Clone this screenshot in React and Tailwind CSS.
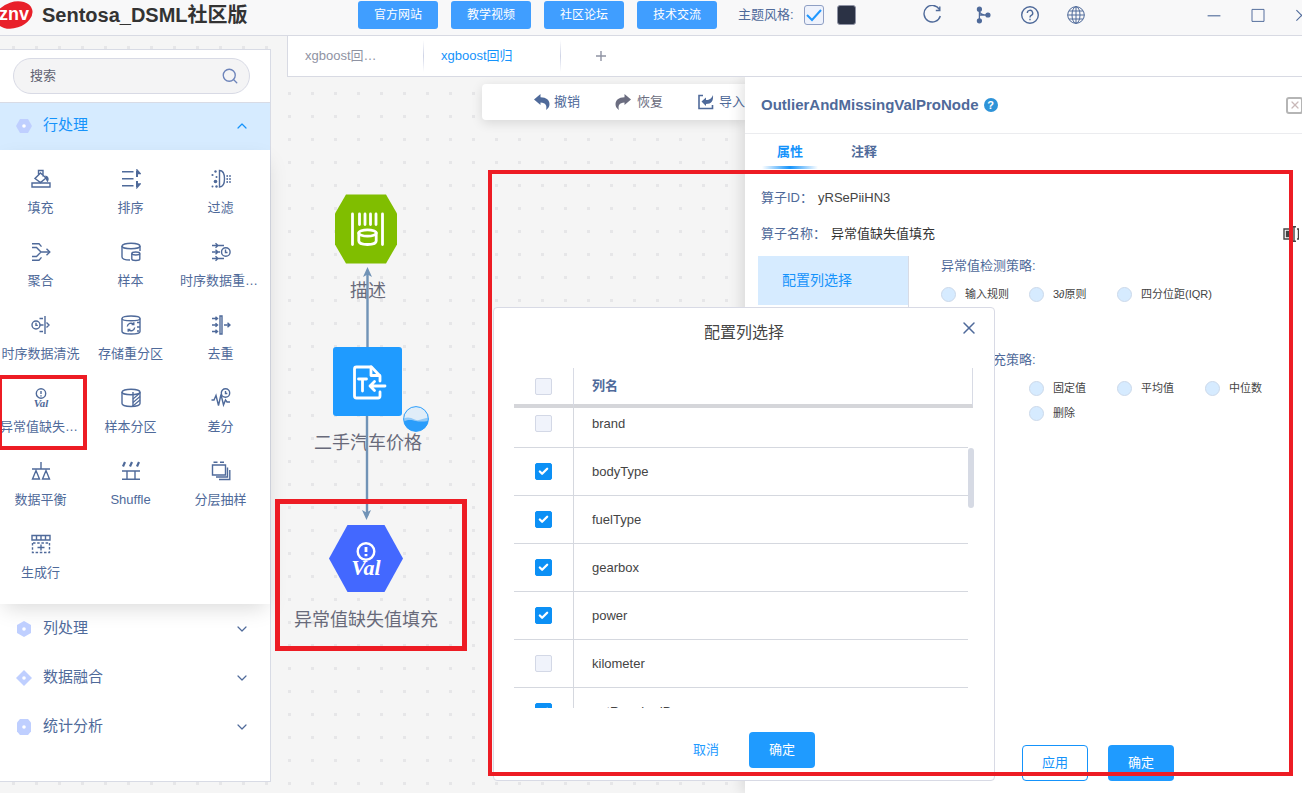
import React, { useState } from 'react';
import { ChevronUp, ChevronDown, Search, X, Check } from 'lucide-react';

const FONT = 'font-["Liberation_Sans","Noto_Sans_CJK_SC",sans-serif]';

const Icon = ({ children, className = 'w-5 h-5' }) => (
  <svg
    viewBox="0 0 20 20"
    fill="none"
    stroke="currentColor"
    strokeWidth="1.4"
    className={className}
    aria-hidden="true"
  >
    {children}
  </svg>
);

const FillIcon = () => (
  <Icon>
    <path d="M1 14h18v4H1z" />
    <path d="M9.5 4 15 9l-5.500 4.500L4 9.500z M7.500 6V1.500h4.500v6" />
    <path d="M15 7.500c2 .5 2.500 2.500 1.500 4.500-1-1-1.500-2.500-1.500-4.500z" fill="currentColor" />
  </Icon>
);

const SortIcon = () => (
  <Icon>
    <path d="M1 2.700h11.500M1 9.700h11.500M1 16.700h11.500" />
    <path d="M16 8V2M16 18v-6" strokeWidth="2" />
    <path d="M16 1l3 3.500h-3zM16 18.500l3-3.500h-3z" fill="currentColor" />
  </Icon>
);

const FilterIcon = () => (
  <Icon>
    <path d="M8.500 1.500v16.500c4 0 5-4 5-8.200s-1-8.300-5-8.300z" />
    <g fill="currentColor" stroke="none">
      <circle cx="4.500" cy="2.500" r="1.200" />
      <circle cx="1.500" cy="6" r="1.100" />
      <circle cx="5.500" cy="8" r="1" />
      <circle cx="4.500" cy="12.500" r="1.800" />
      <circle cx="1.500" cy="17.500" r="1" />
      <circle cx="5.500" cy="17.500" r="1.200" />
      <circle cx="16.200" cy="7" r=".9" />
      <circle cx="19" cy="7" r=".9" />
      <circle cx="16.200" cy="10" r=".9" />
      <circle cx="19" cy="10" r=".9" />
      <circle cx="16.200" cy="13" r=".9" />
      <circle cx="19" cy="13" r=".9" />
    </g>
  </Icon>
);

const AggregateIcon = () => (
  <Icon>
    <path d="M1 1.800h7l2.500 2.800M1 5.500h4.500L10 10h8.500M1 14.500h4.500L10 10M1 18.200h7l2.500-2.800" />
    <path d="M15.500 6.800 18.800 10l-3.300 3.200" />
  </Icon>
);

const SampleIcon = () => (
  <Icon>
    <ellipse cx="10" cy="4" rx="9" ry="2.800" />
    <path d="M1 4v11c0 1.800 3.500 3 8 3M19 4v5" />
    <ellipse cx="14.800" cy="11.500" rx="4" ry="1.500" />
    <path d="M10.800 11.500v5.500c0 .9 1.700 1.500 4 1.500s4-.6 4-1.500v-5.500" />
  </Icon>
);

const ResampleIcon = () => (
  <Icon>
    <path d="M1 3.500h12M1 10h8M1 16.500h12M4.500 1.200 7 3.500 4.500 5.800M4.500 7.700 7 10l-2.500 2.300M4.500 14.200 7 16.500l-2.500 2.300" />
    <circle cx="14.800" cy="10" r="4.300" />
    <path d="M14.500 7.500V10.500h2" />
  </Icon>
);

const CleanIcon = () => (
  <Icon>
    <circle cx="5" cy="10" r="4" />
    <path d="M5 7.800v2.600h1.800M9 10h3.500M8.500 3.500h3.500M8.500 16.500h3.500M14 1v18M15.500 7.500l2.500 2.500-2.500 2.500" />
  </Icon>
);

const RepartitionIcon = () => (
  <Icon>
    <path d="M1 3.500C1 2 5 1 10 1s9 1 9 2.500v13c0 1.500-4 2.500-9 2.500s-9-1-9-2.500z" />
    <path d="M1 3.500C1 5 5 5.800 10 5.800s9-.8 9-2.300" />
    <path d="M6.300 11.500a3.700 3.700 0 0 1 6.200-2.300M13.700 12.500a3.700 3.700 0 0 1-6.200 2.300M12.800 7.300v2.200h-2.200M7.200 16.700v-2.200h2.200M16 7.500h3M16 12h3M16 16h2" />
  </Icon>
);

const DistinctIcon = () => (
  <Icon>
    <path d="M1 3.500h5M1 10h5M1 16.500h5M13 10h5.500M4.500 1.800 6.500 3.500l-2 1.700M4.500 8.300 6.500 10l-2 1.700M4.500 14.800l2 1.700-2 1.700M16.500 7.700l2.500 2.300-2.500 2.300" />
    <path d="M9 1v18h2V1z" />
  </Icon>
);

const ValIcon = () => (
  <Icon>
    <circle cx="10" cy="5.500" r="4.700" />
    <path d="M10 2.900v3.200M10 7.200v1.200" />
    <text
      x="10"
      y="19"
      textAnchor="middle"
      fill="currentColor"
      stroke="none"
      className='font-["Liberation_Serif",serif] text-[11px] font-bold italic'
    >
      Val
    </text>
  </Icon>
);

const SplitIcon = () => (
  <Icon>
    <ellipse cx="10" cy="4" rx="9" ry="2.800" />
    <path d="M1 4v11.500c0 1.700 4 3 9 3s9-1.300 9-3V4M12 4v14" />
    <path d="M12 11l7-6M12 14.500l7-6M12.500 17.500l6.500-5.500" strokeWidth="1.100" />
  </Icon>
);

const DiffIcon = () => (
  <Icon>
    <path d="M.5 12h2.500l2-4.500 2.500 10 2.500-11 2.500 10.500 2-5 1.500 2h3" />
    <circle cx="14.500" cy="5" r="4.200" />
    <path d="M14.500 3v2.500h1.800" />
  </Icon>
);

const BalanceIcon = () => (
  <Icon>
    <path d="M1 8h18M10 1v7M1.500 18h7L5 9.500zM11.500 18h7L15 9.500z" />
  </Icon>
);

const ShuffleIcon = () => (
  <Icon>
    <path d="M4 1 2 5.500M11 1 9 5.500M18 1l-2 4.500" strokeWidth="2.200" />
    <path d="M1 10h18M1 18.300h18M6 10v8M14 10v8" />
  </Icon>
);

const LayerIcon = () => (
  <Icon>
    <path d="M1.500 4h13v10h-13zM2.500 1.300h4M9 1.300h4M16.500 6.500V16H5M18.800 9v9.500H8" />
  </Icon>
);

const GenerateIcon = () => (
  <Icon>
    <path d="M1 1.500h18v4.500H1zM5.500 1.500V6M10 1.500V6M14.500 1.500V6" />
    <path d="M1.500 9v9.500h17V9M2 9h16" strokeDasharray="2.500 1.700" />
    <path d="M10 10.500v6M6.500 13.500h7" />
  </Icon>
);

const OPERATORS = [
  { name: '填充', icon: FillIcon },
  { name: '排序', icon: SortIcon },
  { name: '过滤', icon: FilterIcon },
  { name: '聚合', icon: AggregateIcon },
  { name: '样本', icon: SampleIcon },
  { name: '时序数据重采样', icon: ResampleIcon },
  { name: '时序数据清洗', icon: CleanIcon },
  { name: '存储重分区', icon: RepartitionIcon },
  { name: '去重', icon: DistinctIcon },
  { name: '异常值缺失值填充', icon: ValIcon },
  { name: '样本分区', icon: SplitIcon },
  { name: '差分', icon: DiffIcon },
  { name: '数据平衡', icon: BalanceIcon },
  { name: 'Shuffle', icon: ShuffleIcon },
  { name: '分层抽样', icon: LayerIcon },
  { name: '生成行', icon: GenerateIcon }
];

const GROUPS = [
  { name: '列处理', shape: 'M8 0l7 4v8l-7 4-7-4V4z' },
  { name: '数据融合', shape: 'M8 0l8 8-8 8-8-8z' },
  { name: '统计分析', shape: 'M4 0h8l3 3.500v9L12 16H4l-3-3.500v-9z' }
];

const LINKS = ['官方网站', '教学视频', '社区论坛', '技术交流'];

const COLUMNS = [
  { name: 'brand', checked: false },
  { name: 'bodyType', checked: true },
  { name: 'fuelType', checked: true },
  { name: 'gearbox', checked: true },
  { name: 'power', checked: true },
  { name: 'kilometer', checked: false },
  { name: 'notRepairedDamage', checked: true }
];

const GroupMark = ({ shape }) => (
  <svg viewBox="0 0 16 16" className="h-4 w-4 shrink-0" aria-hidden="true">
    <path d={shape} fill="#bfcfff" />
    <circle cx="8" cy="8" r="1.800" fill="#fff" />
  </svg>
);

const Header = () => (
  <header className="flex h-9 shrink-0 items-center overflow-hidden border-b border-[#d8dae3] bg-[#f8f8f9] pb-[5px] text-[#4f6a9a]">
    <svg viewBox="0 0 34 30" className="h-[30px] w-[34px] shrink-0" aria-hidden="true">
      <ellipse cx="14" cy="15" rx="19" ry="13" fill="#e8202a" transform="rotate(-18 14 15)" />
      <text
        x="-1"
        y="20"
        fill="#fff"
        className='font-["Liberation_Sans",sans-serif] text-[18px] font-bold'
      >
        znv
      </text>
    </svg>
    <h1 className="ml-2 w-[316px] shrink-0 whitespace-nowrap text-[20px] leading-7 font-bold text-[#333]">
      Sentosa_DSML社区版
    </h1>
    <nav className="flex shrink-0 gap-[13px]">
      {LINKS.map((name) => (
        <button key={name} className="h-7 w-20 rounded-[3px] bg-[#409eff] text-xs text-white">
          {name}
        </button>
      ))}
    </nav>
    <div className="ml-[21px] flex shrink-0 items-center">
      <span className="text-[13px]">主题风格:</span>
      <label className="relative ml-[10px] flex">
        <input
          type="checkbox"
          defaultChecked
          aria-label="浅色主题"
          className="h-5 w-5 appearance-none rounded-[3px] border border-[#8f9fc4] bg-[#eef2fc]"
        />
        <svg
          viewBox="0 0 20 20"
          className="pointer-events-none absolute inset-0 h-5 w-5 text-[#1f97ff]"
          fill="none"
          stroke="currentColor"
          strokeWidth="2"
        >
          <path d="M3 10l5 5L17 5" />
        </svg>
      </label>
      <button aria-label="深色主题" className="ml-[13px] h-5 w-[19px] rounded-[3px] border border-[#8f93a5] bg-[#2b3245]" />
    </div>
    <div className="ml-[66px] flex shrink-0 items-center gap-7">
      <button aria-label="刷新">
        <Icon>
          <path d="M17.500 4.500A8.300 8.300 0 1 0 18.300 11M17.800 1.500v4h-4" />
        </Icon>
      </button>
      <button aria-label="流程">
        <Icon className="ml-1 h-[18px] w-[18px]">
          <path d="M6 4v12M6 10h9M6 5c0 3 3 5 9 5" />
          <g fill="currentColor">
            <circle cx="6" cy="3.500" r="2.200" />
            <circle cx="6" cy="16.500" r="2.200" />
            <circle cx="15.500" cy="10" r="2.200" />
          </g>
        </Icon>
      </button>
      <button aria-label="帮助">
        <Icon>
          <circle cx="10" cy="10" r="8.300" />
          <path d="M7.300 8a2.700 2.700 0 1 1 4 2.400c-.9.5-1.300 1-1.300 2M10 13.800v1.400" />
        </Icon>
      </button>
      <button aria-label="语言" className="-ml-[2px]">
        <Icon>
          <g strokeWidth="1">
            <circle cx="10" cy="10" r="8.300" />
            <ellipse cx="10" cy="10" rx="4" ry="8.300" />
            <path d="M10 1.700v16.600M1.700 10h16.600M3 6h14M3 14h14" />
          </g>
        </Icon>
      </button>
    </div>
    <div className="-mr-2 ml-auto flex shrink-0 items-center gap-7">
      <button aria-label="最小化">
        <Icon className="h-4 w-4">
          <path d="M2 11h16" />
        </Icon>
      </button>
      <button aria-label="最大化">
        <Icon className="h-4 w-4">
          <path d="M2.500 3h15v15h-15z" strokeWidth="1.200" />
        </Icon>
      </button>
      <button aria-label="关闭">
        <Icon className="h-4 w-4">
          <path d="M3 4l13 13M16 4 3 17" />
        </Icon>
      </button>
    </div>
  </header>
);

const Sidebar = () => (
  <aside className="relative mt-[13px] mb-[11px] flex w-[271px] shrink-0 flex-col border-t border-r border-b border-[#d8dbe5] bg-white text-[#4f6a9a]">
    <div className="border-b border-[#d8dbe5] px-[13px] pt-2 pb-2">
      <div className="flex h-9 w-[237px] items-center rounded-full border border-[#d8dae5] bg-[#f4f4f5] pr-[10px] pl-4">
        <input
          aria-label="搜索"
          placeholder="搜索"
          className="min-w-0 flex-1 bg-transparent text-[13px] outline-none placeholder:text-[#5f6272]"
        />
        <Search className="h-[18px] w-[18px] text-[#6d84ba]" strokeWidth={1.8} />
      </div>
    </div>

    <button className="flex h-[47px] shrink-0 items-center bg-[#d6ebff] pr-5 pb-[2px] pl-4 text-[15px] text-[#1593fb]">
      <GroupMark shape="M4 1h8l4 7-4 7H4L0 8z" />
      <span className="ml-[11px]">行处理</span>
      <ChevronUp className="ml-auto h-4 w-4" strokeWidth={1.8} />
    </button>

    <div className="grid grid-cols-3 gap-x-[9px] gap-y-6 pt-[19px] pr-[9px] pb-[21px] shadow-[0_8px_20px_-4px_rgba(0,0,0,0.15)]">
      {OPERATORS.map(({ name, icon: OperatorIcon }) => (
        <button key={name} className="flex min-w-0 flex-col items-center gap-[9px]">
          <OperatorIcon />
          <span className="w-full truncate text-center text-[13px] leading-5">{name}</span>
        </button>
      ))}
    </div>

    {GROUPS.map((group) => (
      <button key={group.name} className="flex h-[49px] items-center pr-5 pl-4 text-[15px]">
        <GroupMark shape={group.shape} />
        <span className="ml-[11px]">{group.name}</span>
        <ChevronDown className="ml-auto h-4 w-4" strokeWidth={1.8} />
      </button>
    ))}

    <div className="pointer-events-none absolute top-[325px] -left-[2px] h-[75px] w-[89px] border-4 border-[#ed1c24]" />
  </aside>
);

const TabBar = () => (
  <div className="flex h-[41px] shrink-0 items-center border-b border-l border-[#d8dae3] bg-white text-[13px]">
    <button className="w-[135px] truncate pr-11 pl-[17px] text-left text-[#8f93a3]">xgboost回归1</button>
    <span className="h-8 w-px bg-linear-to-b from-transparent via-[#cfd4e6] to-transparent" />
    <button className="w-[136px] pl-[17px] text-left text-[#1593fb]">xgboost回归</button>
    <span className="h-8 w-px bg-linear-to-b from-transparent via-[#cfd4e6] to-transparent" />
    <button aria-label="新建" className="ml-[34px] text-[#8f93a3]">
      <svg viewBox="0 0 12 12" className="h-3 w-3" stroke="currentColor" strokeWidth="1.400">
        <path d="M6 1v10M1 6h10" />
      </svg>
    </button>
  </div>
);

const Toolbar = () => (
  <div className="mt-[7px] ml-[195px] flex h-9 items-center gap-[35px] overflow-hidden rounded-l bg-white pl-[52px] text-[13px] text-[#4f6a9a] shadow-[0_3px_12px_rgba(0,0,0,0.12)]">
    <button className="flex shrink-0 items-center gap-1">
      <svg viewBox="0 0 16 16" className="h-4 w-4" fill="currentColor">
        <path d="M0 5.500 6.500 0v3.300c6 0 9 3.200 9 7 0 2.400-1.300 4.400-3.500 5.700 1.300-4.200-.3-7.300-5.500-7.500V11z" />
      </svg>
      撤销
    </button>
    <button className="flex shrink-0 items-center gap-[6px] text-[#6b6d80]">
      <svg viewBox="0 0 16 16" className="h-4 w-4" fill="currentColor">
        <path d="M16 5.500 9.500 0v3.300c-6 0-9 3.200-9 7 0 2.400 1.300 4.400 3.500 5.700-1.300-4.200.3-7.300 5.500-7.500V11z" />
      </svg>
      恢复
    </button>
    <button className="flex shrink-0 items-center gap-[5px]">
      <svg viewBox="0 0 16 16" className="h-4 w-4" fill="none" stroke="currentColor" strokeWidth="1.600">
        <path d="M5 1.500H1v13h13.500V11" />
        <path d="M3.500 7.500 8 3.500V6c4 0 5.500-1.500 7-5 .5 6-1.500 9-7 9v2z" fill="currentColor" stroke="none" />
      </svg>
      导入
    </button>
  </div>
);

// Nodes sit at free coordinates on the canvas
const Canvas = () => (
  <section className="relative min-w-0 flex-1 overflow-hidden text-[18px] leading-6 text-[#686a7a]">
    <Toolbar />

    <div className="absolute top-[202px] left-[21px] w-[120px] text-center">描述</div>
    <div className="absolute top-[354px] left-[11px] w-[140px] text-center">二手汽车价格</div>
    <div className="absolute top-[531px] left-0 w-[158px] text-center">异常值缺失值填充</div>

    <svg className="absolute top-0 left-0 h-[600px] w-[200px]" aria-hidden="true">
      <g stroke="#7193b6" strokeWidth="2.400" fill="none">
        <path d="M80.500 270v-74M80 339v100" />
      </g>
      <g fill="#7193b6">
        <path d="M80.500 190l4.500 10-4.500-2.500-4.500 2.500z" />
        <path d="M79.500 443l4.500-10-4.500 2.500-4.500-2.500z" />
      </g>
    </svg>

    <svg viewBox="0 0 62 70" className="absolute top-[117px] left-[48px] h-[70px] w-[62px]" aria-hidden="true">
      <path d="M11 .5h40l11 19v31l-11 19H11l-11-19v-31z" fill="#80be00" />
      <g stroke="#fff" strokeWidth="2.800" strokeLinecap="round" fill="none">
        <path d="M17.500 20v30.500M47.500 20v30.500M24.500 20v10.500M30 20v10.500M35.500 20v10.500M41 20v10.500" />
        <ellipse cx="32.500" cy="39" rx="8.700" ry="3.200" />
        <path d="M23.800 39v8c0 2 3.500 3.500 8.700 3.500s8.700-1.500 8.700-3.500v-8" />
      </g>
    </svg>

    <svg viewBox="0 0 69 69" className="absolute top-[270px] left-[46px] h-[69px] w-[69px]" aria-hidden="true">
      <rect width="69" height="69" rx="3" fill="#1f9bff" />
      <g stroke="#fff" strokeWidth="2.800" strokeLinecap="round" strokeLinejoin="round" fill="none">
        <path d="M47 34v-5l-8.500-9H23.500a2 2 0 0 0-2 2v27a2 2 0 0 0 2 2H45a2 2 0 0 0 2-2v-4" />
        <path d="M38 20v8.500h8.500M25.500 32h8M29.500 32v12M37 39h15M41.500 34.500 37 39l4.500 4.500" />
      </g>
    </svg>
    <svg viewBox="0 0 26 26" className="absolute top-[329px] left-[116px] h-[26px] w-[26px]" aria-hidden="true">
      <circle cx="13" cy="13" r="12.300" fill="#e0edf8" />
      <path d="M.7 12.500c4-2 7-1 11 1s8-1 13.600-2c.5 8-5 13.800-12.300 13.800S.3 19 .7 12.500z" fill="#92c9f7" />
      <path d="M.9 15.500c5-2.500 8-1.500 12-.5s8 .5 12.300 0c-1 6-6 10.300-12.200 10.300S1.500 21 .9 15.500z" fill="#2a9dfb" />
      <circle cx="13" cy="13" r="12.400" fill="none" stroke="#2a9dfb" />
    </svg>

    <svg viewBox="0 0 74 67" className="absolute top-[448px] left-[42px] h-[67px] w-[74px]" aria-hidden="true">
      <path d="M18.500 0h37L74 33.500 55.500 67h-37L0 33.500z" fill="#4368ff" />
      <circle cx="37" cy="26.500" r="8.300" fill="none" stroke="#fff" strokeWidth="2.400" />
      <path d="M37 22v5M37 29v2.200" stroke="#fff" strokeWidth="2.800" />
      <text
        x="37"
        y="50"
        fill="#fff"
        textAnchor="middle"
        className='font-["Liberation_Serif",serif] text-[22px] font-bold italic'
      >
        Val
      </text>
    </svg>
  </section>
);

const RadioOption = ({ group, label, className = '' }) => (
  <label className={`flex items-center gap-[9px] whitespace-nowrap ${className}`}>
    <input
      type="radio"
      name={group}
      className="h-[15px] w-[15px] shrink-0 appearance-none rounded-full border border-[#ccd9ea] bg-[#d6ebff] checked:bg-[#1f9bff]"
    />
    {label}
  </label>
);

const PropertyPanel = () => (
  <section className="relative flex w-[557px] shrink-0 flex-col bg-white text-[13px] text-[#4f6a9a] shadow-[-3px_0_14px_rgba(0,0,0,0.12)]">
    <div className="flex h-[57px] shrink-0 items-center border-b border-[#ebecef] pl-4">
      <h2 className="text-[15px] font-bold">OutlierAndMissingValProNode</h2>
      <button
        aria-label="帮助"
        className="ml-[5px] h-[14px] w-[14px] rounded-full bg-[#2e93d8] text-[11px] leading-[14px] font-bold text-white"
      >
        ?
      </button>
      <button
        aria-label="关闭"
        className="mr-[-1px] ml-auto flex h-[17px] w-[17px] items-center justify-center rounded-[3px] border-2 border-[#b5b5b5] text-[#c9b9b9]"
      >
        <X className="h-3 w-3 shrink-0" strokeWidth={2.5} />
      </button>
    </div>

    <div className="flex font-bold">
      <button className="ml-[17px] flex w-14 flex-col items-center pt-2 text-[#1593fb]">
        <span className="leading-5">属性</span>
        <span className="mt-1 h-[3px] w-full bg-linear-to-r from-transparent via-[#1593fb] to-transparent" />
      </button>
      <button className="ml-[33px] pt-2 pb-[7px] leading-5">注释</button>
    </div>

    <dl className="mt-[19px] flex flex-col gap-4 pl-4 leading-5">
      <div className="flex gap-[5px]">
        <dt>算子ID：</dt>
        <dd className="text-[#444]">yRSePiiHN3</dd>
      </div>
      <div className="flex items-center gap-[5px]">
        <dt>算子名称：</dt>
        <dd className="text-[#333]">异常值缺失值填充</dd>
        <button aria-label="编辑" className="mr-[3px] ml-auto text-[#444]">
          <svg viewBox="0 0 16 16" className="h-4 w-4" fill="none" stroke="currentColor" strokeWidth="1.400">
            <path d="M9.500 3H1v10h8.500M14 3h1.500v10H14M9 .7h4M9 15.300h4M11 1v14" />
            <path d="M3.500 5.500h5v5h-5z" fill="currentColor" />
          </svg>
        </button>
      </div>
    </dl>

    <div className="mt-3 flex min-h-0 flex-1 pl-[13px]">
      <div className="w-[151px] shrink-0 border-r border-[#d8dbe5]">
        <button className="h-[49px] w-full bg-[#d6ebff] pb-[2px] pl-6 text-left text-sm text-[#1593fb]">
          配置列选择
        </button>
      </div>
      <div className="ml-8 flex-1">
        <fieldset>
          <legend className="leading-5">异常值检测策略:</legend>
          <div className="mt-[8px] grid grid-cols-[88px_88px_88px_88px] text-[11px] leading-5 text-[#444]">
            <RadioOption group="outlier" label="输入规则" />
            <RadioOption group="outlier" label="3∂原则" />
            <RadioOption group="outlier" label="四分位距(IQR)" />
          </div>
        </fieldset>
        <fieldset className="mt-[46px]">
          <legend className="leading-5">缺失值填充策略:</legend>
          <div className="mt-[8px] grid grid-cols-[88px_88px_88px_88px] gap-y-[5px] text-[11px] leading-5 text-[#444]">
            <RadioOption group="missing" label="固定值" className="col-start-2" />
            <RadioOption group="missing" label="平均值" />
            <RadioOption group="missing" label="中位数" />
            <RadioOption group="missing" label="删除" className="col-start-2" />
          </div>
        </fieldset>
      </div>
    </div>

    <div className="mb-3 flex gap-5 pl-[277px]">
      <button className="h-9 w-[66px] rounded border border-[#1593fb] bg-white text-[#1593fb]">应用</button>
      <button className="h-9 w-[66px] rounded bg-[#1f9bff] text-white">确定</button>
    </div>
  </section>
);

const CheckBox = ({ label, checked, onChange }) => (
  <label className="relative mx-auto flex h-[17px] w-[17px]">
    <input
      type="checkbox"
      aria-label={label}
      checked={checked}
      onChange={onChange}
      className="h-[17px] w-[17px] appearance-none rounded-[2px] border border-[#d3d8e6] bg-[#f0f3fb] checked:border-[#0c90f5] checked:bg-[#0c90f5]"
    />
    {checked && (
      <Check className="pointer-events-none absolute top-[3px] left-[3px] h-[11px] w-[11px] text-white" strokeWidth={5} />
    )}
  </label>
);

const ColumnDialog = () => {
  const [columns, setColumns] = useState(COLUMNS);

  const toggle = (name) => {
    setColumns(columns.map((c) => (c.name === name ? { ...c, checked: !c.checked } : c)));
  };

  const allChecked = columns.every((c) => c.checked);

  return (
    <div
      role="dialog"
      aria-label="配置列选择"
      className="absolute top-[307px] left-[493px] w-[502px] rounded border border-[#d8dae5] bg-white pb-3 text-[13px] text-[#444]"
    >
      <div className="relative pt-[13px] text-center text-base leading-6">
        配置列选择
        <button aria-label="关闭" className="absolute top-[10px] right-[15px] text-[#4f6a9a]">
          <X className="h-5 w-5" strokeWidth={1.8} />
        </button>
      </div>

      <div className="relative mt-[23px] mr-[21px] ml-5">
        <table className="w-full table-fixed border-separate border-spacing-0">
          <thead>
            <tr className="h-10">
              <th className="w-[60px] border-r border-b-4 border-r-[#d8dbe5] border-b-[#d5d6da]">
                <CheckBox
                  label="全选"
                  checked={allChecked}
                  onChange={() => setColumns(columns.map((c) => ({ ...c, checked: !allChecked })))}
                />
              </th>
              <th className="border-r border-b-4 border-r-[#d8dbe5] border-b-[#d5d6da] pl-[18px] text-left font-bold text-[#4f6a9a]">
                列名
              </th>
            </tr>
          </thead>
        </table>
        <div className="h-[300px] overflow-hidden pr-[5px]">
          <table className="-mt-2 w-full table-fixed border-separate border-spacing-0">
            <tbody>
              {columns.map((column) => (
                <tr key={column.name} className="h-12">
                  <td className="w-[60px] border-r border-b border-[#d5d8df]">
                    <CheckBox
                      label={column.name}
                      checked={column.checked}
                      onChange={() => toggle(column.name)}
                    />
                  </td>
                  <td className="border-b border-[#d5d8df] pl-[18px]">{column.name}</td>
                </tr>
              ))}
            </tbody>
          </table>
        </div>
        <span className="absolute top-20 -right-px h-[60px] w-[6px] rounded-full bg-[#d6dae4]" />
      </div>

      <div className="mt-6 flex justify-center gap-[10px]">
        <button className="h-9 w-[66px] text-[#1f9bff]">取消</button>
        <button className="h-9 w-[66px] rounded bg-[#1f9bff] text-white">确定</button>
      </div>
    </div>
  );
};

const App = () => {
  return (
    <div
      className={`relative flex h-screen flex-col overflow-hidden bg-[#f5f5f5] bg-[radial-gradient(circle,#e6e6e8_1.5px,transparent_1.5px)] bg-[length:23px_23px] bg-[position:2px_13px] ${FONT}`}
    >
      <Header />
      <div className="flex min-h-0 flex-1">
        <Sidebar />
        <main className="ml-4 flex min-w-0 flex-1 flex-col">
          <TabBar />
          <div className="flex min-h-0 flex-1 overflow-hidden">
            <Canvas />
            <PropertyPanel />
          </div>
        </main>
      </div>

      <ColumnDialog />

      {/* Highlight frames */}
      <div className="pointer-events-none absolute top-[499px] left-[275px] h-[152px] w-[192px] border-5 border-[#ed1c24]" />
      <div className="pointer-events-none absolute top-[170px] left-[488px] h-[606px] w-[805px] border-4 border-[#ed1c24]" />
    </div>
  );
};

export default App;
